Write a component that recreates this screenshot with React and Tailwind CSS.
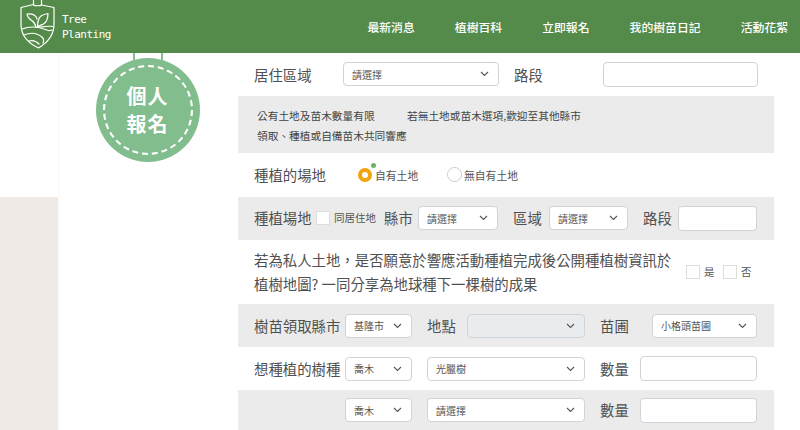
function Chevron() {
  return (
    <svg width="9" height="6" viewBox="0 0 9 6" fill="none" stroke="#555" strokeWidth="1.1" className="shrink-0">
      <path d="M1 1l3.5 3.5L8 1" />
    </svg>
  );
}

function Select({ w, value, bg = "bg-white", pad = "pl-2" }) {
  return (
    <div className={`${w} ${bg} ${pad} h-[24px] pr-[9px] shrink-0 flex items-center justify-between rounded-[4px] border border-[#ced4da] text-[10px] text-[#555]`}>
      <span>{value}</span>
      <Chevron />
    </div>
  );
}

function Field({ w }) {
  return <div className={`${w} h-[25px] shrink-0 bg-white rounded-[4px] border border-[#ced4da]`} />;
}

function Label({ children, w, className = "" }) {
  return <span className={`${w} ${className} shrink-0 whitespace-nowrap text-[14.4px] text-[#505050]`}>{children}</span>;
}

function Box() {
  return <span className="w-[14px] h-[14px] shrink-0 bg-white border border-[#ddd]" />;
}

function Row({ h, gray, children, className = "" }) {
  return (
    <div className={`${h} ${gray ? "bg-[#ebebeb]" : "bg-white"} ${className} flex items-center pl-4 w-full`}>
      {children}
    </div>
  );
}

function Logo() {
  return (
    <svg width="38" height="50" viewBox="19 0 38 50" fill="none" stroke="#fff" strokeWidth="1.2" strokeLinejoin="round" strokeLinecap="round" className="shrink-0">
      <path d="M33.5 0v4.5L21 7.5v17c0 11 8 19 17.5 23.5C47 43 54 35 54 24V7.5L41.5 5V0" />
      <path d="M33.5 5c1.5 1 6.5 1 8 0" />
      <path d="M36 27c-1-4-2.5-5.5-5-7-2-1.200-3.500-3-4-6 5-.5 9 1 10 5" />
      <path d="M37.500 27c0-6 1.500-9.500 3.500-11 2-1.500 4.500-2 7-2.500 0 5-1.500 8.500-4.500 10.500-2 1-4 1.500-6 3" />
      <path d="M22 29c8-3 18-2 25 1 2 1 3 1 5 0" />
      <path d="M24 35c7-3 13-2 18 2 2 2 2 4 1 6" />
      <path d="M29 41c4-1 7 0 10 3" />
      <path d="M36 27.500c5 0 11-2 17-1" />
    </svg>
  );
}

const navItems = ["最新消息", "植樹百科", "立即報名", "我的樹苗日記", "活動花絮"];

export default function App() {
  return (
    <div
      className="w-[800px] h-[430px] overflow-hidden bg-white flex flex-col"
      style={{ fontFamily: '"Noto Sans CJK TC", "Noto Sans", sans-serif' }}
    >
      <header className="h-[53px] shrink-0 bg-[#558b4a] flex items-start justify-between pl-[19px] pr-3 relative z-10">
        <div className="flex items-start">
          <Logo />
          <div
            className="ml-[5px] mt-[12px] text-[11px] tracking-[-0.5px] leading-[15px] text-white"
            style={{ fontFamily: '"DejaVu Sans Mono", monospace' }}
          >
            <div>Tree</div>
            <div>Planting</div>
          </div>
        </div>
        <nav className="flex gap-10 h-full items-center">
          {navItems.map((n) => (
            <span key={n} className="text-[11.85px] font-medium text-white whitespace-nowrap">{n}</span>
          ))}
        </nav>
      </header>

      <main className="flex flex-1 min-h-0">
        <div className="w-[58px] shrink-0 flex flex-col">
          <div className="h-[144px] bg-white" />
          <div className="flex-1 bg-[#f0ebe6]" />
        </div>

        <div className="w-[180px] shrink-0 flex flex-col items-center pr-[2px] border-l border-[#f8f8f8]">
          <div className="w-[30px] h-[7px] border-x-2 border-[#82bd8e]" />
          <div className="w-[104px] h-[104px] -mt-[2px] shrink-0 rounded-full bg-[#82bd8e] p-[7px]">
            <div className="w-full h-full rounded-full border-2 border-dashed border-white flex flex-col items-center justify-center text-white text-[20px] font-bold leading-[28px] tracking-[1px]">
              <span>個人</span>
              <span>報名</span>
            </div>
          </div>
        </div>

        <div className="w-[536px] shrink-0 flex flex-col">
          <Row h="h-[43px]">
            <Label w="w-[89px]">居住區域</Label>
            <Select w="w-[156px]" value="請選擇" />
            <Label w="w-[89px]" className="ml-[15px]">路段</Label>
            <Field w="w-[155px]" />
          </Row>

          <Row h="h-[57px]" gray className="!pl-[19px]">
            <div className="mt-[3px] text-[10.7px] leading-[20px] text-[#444]">
              <div className="flex"><span className="w-[150px]">公有土地及苗木數量有限</span><span>若無土地或苗木選項,歡迎至其他縣市</span></div>
              <div>領取、種植或自備苗木共同響應</div>
            </div>
          </Row>

          <Row h="h-[44px]">
            <Label w="w-[104px]">種植的場地</Label>
            <span className="relative w-[14px] h-[14px] shrink-0 rounded-full border-[4px] border-[#f0a50e] bg-white">
              <span className="absolute -top-[9px] left-[9px] w-[5px] h-[5px] rounded-full bg-[#6db35f]" />
            </span>
            <span className="ml-[3px] mt-[1px] w-[72px] text-[10.8px] text-[#555]">自有土地</span>
            <span className="w-[15px] h-[15px] shrink-0 rounded-full border border-[#ccc] bg-white" />
            <span className="ml-[2px] mt-[1px] text-[10.8px] text-[#555]">無自有土地</span>
          </Row>

          <Row h="h-[43px]" gray>
            <Label w="w-[62px]">種植場地</Label>
            <Box />
            <span className="ml-[4px] w-[50px] shrink-0 text-[10.5px] text-[#555]">同居住地</span>
            <Label w="w-[34px]">縣市</Label>
            <Select w="w-[80px]" value="請選擇" />
            <Label w="w-[36px]" className="ml-[15px]">區域</Label>
            <Select w="w-[79px]" value="請選擇" />
            <Label w="w-[35px]" className="ml-[15px]">路段</Label>
            <Field w="w-[79px]" />
          </Row>

          <Row h="h-[65px]">
            <p className="w-[432px] shrink-0 text-[14.4px] leading-[24px] text-[#505050]">
              若為私人土地，是否願意於響應活動種植完成後公開種植樹資訊於
              <br />
              植樹地圖? 一同分享為地球種下一棵樹的成果
            </p>
            <Box />
            <span className="ml-[4px] w-[19px] shrink-0 text-[10.5px] text-[#555]">是</span>
            <Box />
            <span className="ml-[4px] text-[10.5px] text-[#555]">否</span>
          </Row>

          <Row h="h-[43px]" gray>
            <Label w="w-[91px]">樹苗領取縣市</Label>
            <Select w="w-[67px]" value="基隆市" />
            <Label w="w-[40px]" className="ml-[15px]">地點</Label>
            <Select w="w-[118px]" value="" bg="bg-[#e9ecef]" />
            <Label w="w-[52px]" className="ml-[15px]">苗圃</Label>
            <Select w="w-[105px]" value="小格頭苗圃" />
          </Row>

          <Row h="h-[43px]">
            <Label w="w-[91px]">想種植的樹種</Label>
            <Select w="w-[67px]" value="喬木" />
            <div className="ml-[15px]"><Select w="w-[158px]" value="光臘樹" /></div>
            <Label w="w-[40px]" className="ml-[15px]">數量</Label>
            <Field w="w-[117px]" />
          </Row>

          <Row h="h-[40px]" gray>
            <span className="w-[91px] shrink-0" />
            <Select w="w-[67px]" value="喬木" />
            <div className="ml-[15px]"><Select w="w-[158px]" value="請選擇" /></div>
            <Label w="w-[40px]" className="ml-[15px]">數量</Label>
            <Field w="w-[117px]" />
          </Row>
        </div>
      </main>
    </div>
  );
}
